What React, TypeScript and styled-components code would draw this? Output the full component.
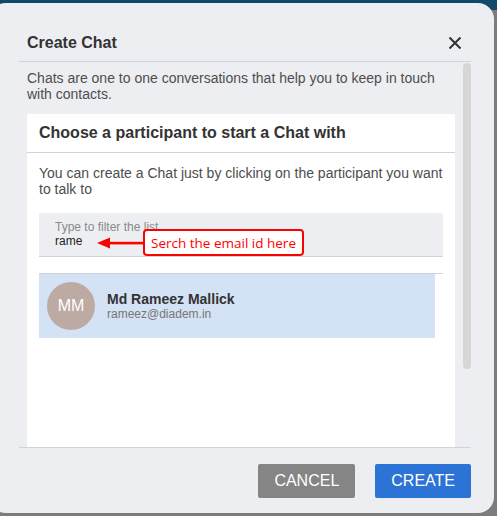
import React from "react";
import styled, { createGlobalStyle } from "styled-components";

const Global = createGlobalStyle`
  html, body { margin: 0; padding: 0; }
  body {
    width: 497px;
    height: 516px;
    overflow: hidden;
    background: linear-gradient(#0f4a6b 0 10px, #7c7c7c 10px);
    font-family: "Liberation Sans", Arial, sans-serif;
  }
`;

const Dialog = styled.div`
  box-sizing: border-box;
  margin: 3px 0 0 -10px;
  width: 504px;
  height: 510px;
  background: #edeef2;
  border-radius: 16px;
  padding: 0 23px 0 29px;
  display: flex;
  flex-direction: column;
`;

const Header = styled.div`
  display: flex;
  align-items: center;
  justify-content: space-between;
  padding: 30px 9px 8px 8px;
  border-bottom: 1px solid #d0d3da;
`;

const Title = styled.h2`
  margin: 0;
  font-size: 16px;
  line-height: 20px;
  font-weight: bold;
  color: #333;
`;

const CloseButton = styled.button`
  border: 0;
  background: none;
  padding: 0;
  width: 14px;
  height: 14px;
  display: flex;
  cursor: pointer;
`;

const ScrollArea = styled.div`
  height: 385px;
  display: flex;
  padding-left: 8px;
  box-sizing: border-box;
`;

const ScrollContent = styled.div`
  flex: 1;
  min-width: 0;
  overflow: hidden;
  padding-top: 8px;
  margin-right: 8px;
`;

const ScrollTrack = styled.div`
  width: 8px;
  flex-shrink: 0;
  padding-top: 1px;
`;

const ScrollThumb = styled.div`
  height: 306px;
  border-radius: 4px;
  background: #d6d6d6;
`;

const Intro = styled.p`
  margin: 0 0 12px;
  font-size: 14px;
  line-height: 16px;
  color: #4d4d4d;
`;

const Card = styled.section`
  background: #fff;
  min-height: 432px;
`;

const CardHeader = styled.div`
  height: 38px;
  display: flex;
  align-items: center;
  padding: 0 12px;
  border-bottom: 1px solid #d0d3da;
  font-size: 16px;
  font-weight: bold;
  color: #333;
`;

const CardBody = styled.div`
  padding: 12px;
`;

const Hint = styled.p`
  margin: 0 0 16px;
  font-size: 14px;
  line-height: 16px;
  color: #4d4d4d;
`;

const Filter = styled.div`
  position: relative;
  background: #edeef2;
  border-bottom: 1px solid #d0d3da;
  padding: 8px 16px 7px;
  border-radius: 2px 2px 0 0;
`;

const FilterLabel = styled.div`
  font-size: 12px;
  line-height: 13px;
  color: #8a8a8a;
`;

const FilterValue = styled.div`
  font-size: 12px;
  line-height: 15px;
  color: #222;
`;

const Callout = styled.div`
  position: absolute;
  left: 58px;
  top: 16px;
  display: flex;
  align-items: center;
`;

const CalloutBox = styled.div`
  border: 2px solid #ff0000;
  border-radius: 4px;
  background: #fff;
  height: 23px;
  padding: 0 6px;
  display: flex;
  align-items: center;
  font-family: "Open Sans", sans-serif;
  font-size: 13.5px;
  color: #ff0000;
  white-space: nowrap;
`;

const List = styled.div`
  margin-top: 16px;
  border-top: 1px solid #d0d3da;
`;

const Item = styled.div<{ $selected?: boolean }>`
  display: flex;
  align-items: center;
  gap: 12px;
  height: 64px;
  margin-right: 8px;
  padding: 0 8px;
  background: ${(p) => (p.$selected ? "#d3e2f5" : "transparent")};
`;

const Avatar = styled.div`
  width: 48px;
  height: 48px;
  border-radius: 50%;
  background: #bcaaa3;
  color: #fff;
  font-size: 16px;
  display: flex;
  align-items: center;
  justify-content: center;
  flex-shrink: 0;
`;

const Name = styled.div`
  font-size: 14px;
  line-height: 16px;
  font-weight: bold;
  color: #333;
`;

const Email = styled.div`
  font-size: 12px;
  line-height: 14px;
  color: #777;
`;

const Footer = styled.div`
  border-top: 1px solid #d0d3da;
  display: flex;
  justify-content: flex-end;
  gap: 20px;
  padding: 16px 0 15px;
`;

const Button = styled.button<{ $primary?: boolean }>`
  height: 34px;
  padding: 0 16px;
  border: 0;
  border-radius: 2px;
  font-family: "Liberation Sans", Arial, sans-serif;
  font-size: 16px;
  color: #fff;
  background: ${(p) => (p.$primary ? "#2b73d4" : "#858585")};
  cursor: pointer;
`;

export default function App() {
  return (
    <>
      <Global />
      <Dialog>
        <Header>
          <Title>Create Chat</Title>
          <CloseButton aria-label="Close">
            <svg width="14" height="14" viewBox="0 0 14 14">
              <path d="M1.5 1.5 L12.5 12.5 M12.5 1.5 L1.5 12.5" stroke="#333" strokeWidth="2" fill="none" />
            </svg>
          </CloseButton>
        </Header>
        <ScrollArea>
          <ScrollContent>
            <Intro>
              Chats are one to one conversations that help you to keep in touch with contacts.
            </Intro>
            <Card>
              <CardHeader>Choose a participant to start a Chat with</CardHeader>
              <CardBody>
                <Hint>
                  You can create a Chat just by clicking on the participant you want to talk to
                </Hint>
                <Filter>
                  <FilterLabel>Type to filter the list</FilterLabel>
                  <FilterValue>rame</FilterValue>
                  <Callout>
                    <svg width="46" height="12" viewBox="0 0 46 12">
                      <path d="M0 6 L13 0.5 L13 11.5 Z" fill="#ff0000" />
                      <rect x="11" y="4.8" width="35" height="2.6" fill="#ff0000" />
                    </svg>
                    <CalloutBox>Serch the email id here</CalloutBox>
                  </Callout>
                </Filter>
                <List>
                  <Item $selected>
                    <Avatar>MM</Avatar>
                    <div>
                      <Name>Md Rameez Mallick</Name>
                      <Email>rameez@diadem.in</Email>
                    </div>
                  </Item>
                </List>
              </CardBody>
            </Card>
          </ScrollContent>
          <ScrollTrack>
            <ScrollThumb />
          </ScrollTrack>
        </ScrollArea>
        <Footer>
          <Button>CANCEL</Button>
          <Button $primary>CREATE</Button>
        </Footer>
      </Dialog>
    </>
  );
}
